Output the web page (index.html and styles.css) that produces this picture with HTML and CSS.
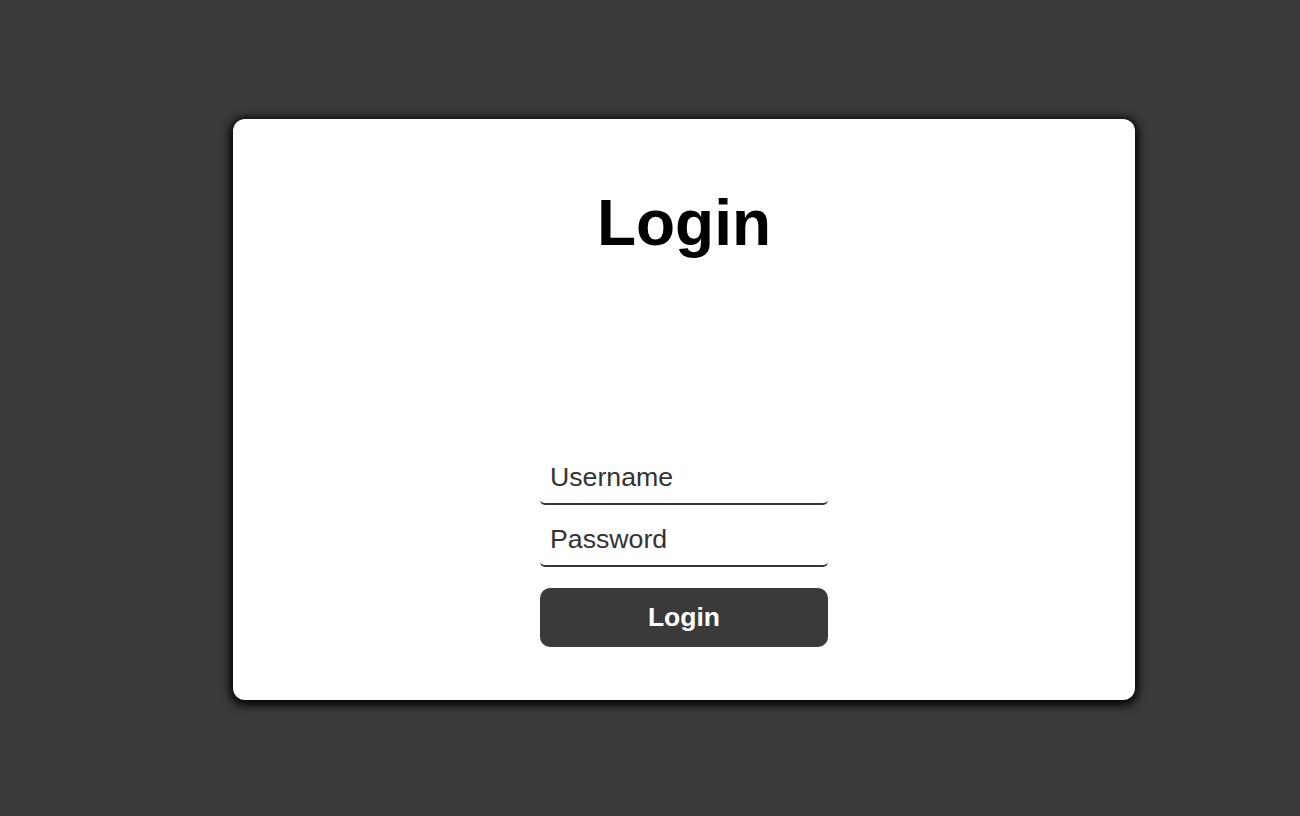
FILE: index.html
```html
<!DOCTYPE html>
<html lang="en">
<head>
    <meta charset="UTF-8">
    <meta name="viewport" content="width=device-width, initial-scale=1.0">
    <title>Login</title>
    <link rel="stylesheet" href="styles.css">
</head>
<body>
    <div class="container">
        <h1>Login</h1>
        <form id="formLogin">
            <input type="text" id="username" placeholder="Username">
            <input type="password" id="password" placeholder="Password">
            <button type="button">Login</button>
        </form>
    </div>
</body>
</html>
```

FILE: styles.css
```css
* {
    font-family: "Liberation Sans", Arial, sans-serif;
}
body {
    background-color: #3a3a3a;
    margin: 0;
    height: 816px;
    padding: 119px 0 0 233px;
    box-sizing: border-box;
}
.container {
    background-color: #fff;
    width: 902px;
    height: 581px;
    box-sizing: border-box;
    padding-top: 67px;
    border-radius: 12px;
    box-shadow: 0 2px 10px 3px #000;
    display: flex;
    flex-direction: column;
    align-items: center;
}
h1 {
    margin: 0;
    font-size: 64px;
    line-height: 74px;
    color: #000;
}
form {
    margin-top: 195px;
    width: 288px;
    display: flex;
    flex-direction: column;
}
input {
    height: 50px;
    box-sizing: border-box;
    padding: 0 10px 4px;
    border: none;
    border-bottom: 2px solid #333;
    border-radius: 5px;
    font-size: 26.7px;
    color: #333;
    outline: none;
    margin-bottom: 12px;
}
input::placeholder {
    color: #333;
}
button {
    margin-top: 9px;
    height: 59px;
    background-color: #3a3a3a;
    color: #fff;
    border: none;
    border-radius: 10px;
    font-size: 26.5px;
    font-weight: bold;
    cursor: pointer;
}
```
